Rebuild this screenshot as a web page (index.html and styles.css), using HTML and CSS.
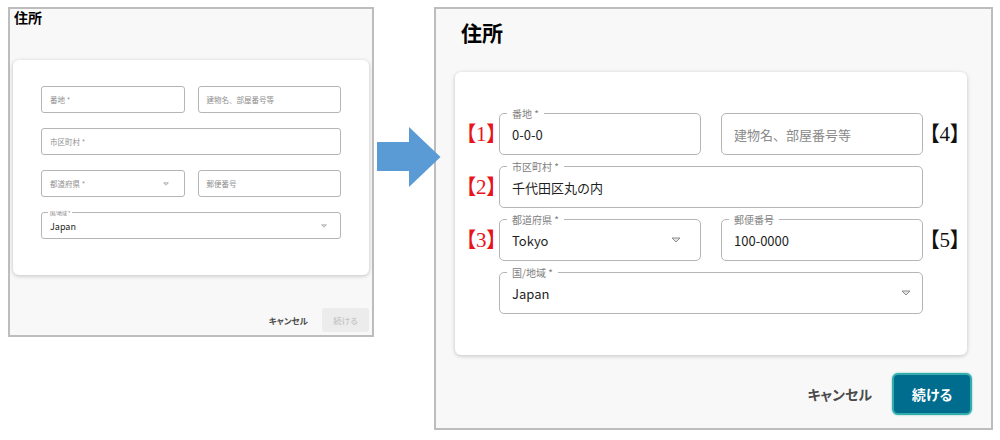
FILE: index.html
```html
<!DOCTYPE html>
<html lang="ja">
<head>
    <meta charset="UTF-8">
    <meta name="viewport" content="width=device-width, initial-scale=1.0">
    <title>住所</title>
    <link rel="stylesheet" href="styles.css">
</head>
<body>
    <div class="stage">
        <!-- before: empty form -->
        <section class="panel panel-before">
            <h2 class="title">住所</h2>
            <div class="card">
                <div class="grid">
                    <div class="field"><span class="placeholder">番地 *</span></div>
                    <div class="field"><span class="placeholder">建物名、部屋番号等</span></div>
                    <div class="field wide"><span class="placeholder">市区町村 *</span></div>
                    <div class="field select">
                        <span class="placeholder">都道府県 *</span>
                        <svg class="caret" viewBox="0 0 10 6"><path d="M1 1 H9 L5 5 Z"/></svg>
                    </div>
                    <div class="field"><span class="placeholder">郵便番号</span></div>
                    <div class="field wide select country">
                        <span class="label">国/地域 *</span>
                        <span class="value">Japan</span>
                        <svg class="caret" viewBox="0 0 10 6"><path d="M1 1 H9 L5 5 Z"/></svg>
                    </div>
                </div>
            </div>
            <div class="actions">
                <button class="btn-cancel">キャンセル</button>
                <button class="btn-next" disabled>続ける</button>
            </div>
        </section>

        <svg class="arrow" viewBox="0 0 64 60" width="64" height="60">
            <path d="M0 15 H32 V0 L63.5 30 L32 60 V44 H0 Z"/>
        </svg>

        <!-- after: filled form -->
        <section class="panel panel-after">
            <h2 class="title">住所</h2>
            <div class="card">
                <div class="grid">
                    <div class="field">
                        <span class="label">番地 *</span>
                        <span class="value">0-0-0</span>
                        <span class="mark mark-left red">【1】</span>
                    </div>
                    <div class="field">
                        <span class="placeholder">建物名、部屋番号等</span>
                        <span class="mark mark-right">【4】</span>
                    </div>
                    <div class="field wide">
                        <span class="label">市区町村 *</span>
                        <span class="value">千代田区丸の内</span>
                        <span class="mark mark-left red">【2】</span>
                    </div>
                    <div class="field select">
                        <span class="label">都道府県 *</span>
                        <span class="value">Tokyo</span>
                        <svg class="caret" viewBox="0 0 10 6"><path d="M1 1 H9 L5 5 Z"/></svg>
                        <span class="mark mark-left red">【3】</span>
                    </div>
                    <div class="field">
                        <span class="label">郵便番号</span>
                        <span class="value">100-0000</span>
                        <span class="mark mark-right">【5】</span>
                    </div>
                    <div class="field wide select country">
                        <span class="label">国/地域 *</span>
                        <span class="value">Japan</span>
                        <svg class="caret" viewBox="0 0 10 6"><path d="M1 1 H9 L5 5 Z"/></svg>
                    </div>
                </div>
            </div>
            <div class="actions">
                <button class="btn-cancel">キャンセル</button>
                <button class="btn-next">続ける</button>
            </div>
        </section>
    </div>
</body>
</html>
```

FILE: styles.css
```css
body {
    margin: 0;
    background: #fff;
    font-family: "Noto Sans CJK JP", "Noto Sans", sans-serif;
    color: #222;
}
.stage {
    display: flex;
    align-items: flex-start;
    padding: 7px 0 0 8px;
}
.panel {
    box-sizing: border-box;
    background: #f8f8f8;
    border: 2px solid #bdbdbd;
    display: flex;
    flex-direction: column;
}
.title {
    margin: 0;
    font-weight: bold;
    color: #000;
}
.card {
    background: #fff;
    border-radius: 6px;
    box-shadow: 0 1px 4px rgba(0, 0, 0, 0.22);
}
.grid {
    display: grid;
    grid-template-columns: 1fr 1fr;
}
.field {
    position: relative;
    display: flex;
    align-items: center;
    box-sizing: border-box;
    border: 1.5px solid #b5b5b5;
    border-radius: 5px;
    background: #fff;
}
.field.wide {
    grid-column: span 2;
}
.value {
    flex: 1;
    color: #1e1e1e;
}
.placeholder {
    flex: 1;
    color: #8a8a8a;
}
.label {
    position: absolute;
    top: 0;
    background: #fff;
    color: #808080;
    line-height: 1;
    transform: translateY(-55%);
}
.caret {
    fill: #e6e6e6;
    stroke: #8c8c8c;
    stroke-width: 1;
    stroke-linejoin: round;
}
.actions {
    display: flex;
    justify-content: flex-end;
    align-items: center;
}
.actions button {
    font-family: inherit;
    font-weight: bold;
    font-feature-settings: "palt";
    border: none;
    cursor: pointer;
    padding: 0;
}
.btn-cancel {
    background: none;
    color: #4a4a4a;
}

/* before panel (small) */
.panel-before {
    width: 366px;
    height: 330px;
    padding: 0 3px;
}
.panel-before .title {
    font-size: 14px;
    line-height: 14px;
    margin: 1px 0 36px 1px;
}
.panel-before .card {
    padding: 26px 28px 36px;
}
.panel-before .grid {
    column-gap: 13px;
    row-gap: 15px;
}
.panel-before .field {
    height: 27px;
    padding: 0 8px;
    border-width: 1px;
    border-radius: 3px;
}
.panel-before .placeholder {
    font-size: 7.5px;
    color: #8f8f8f;
}
.panel-before .value {
    font-size: 9px;
    padding-top: 1px;
}
.panel-before .label {
    font-size: 5px;
    left: 6px;
    padding: 0 2px;
}
.panel-before .caret {
    width: 6px;
    height: 4px;
    margin-right: 7px;
}
.panel-before .country .caret {
    margin-right: 5px;
}
.panel-before .actions {
    margin-top: 33px;
    gap: 14px;
}
.panel-before .btn-cancel {
    font-size: 8.5px;
}
.panel-before .btn-next {
    width: 47px;
    height: 24px;
    border-radius: 3px;
    background: #ececec;
    color: #bcbcbc;
    font-size: 8.5px;
    font-weight: normal;
}

/* arrow between panels */
.arrow {
    position: relative;
    z-index: 1;
    flex: none;
    margin: 120px -7px 0 3px;
    fill: #5b9bd5;
}

/* after panel (large) */
.panel-after {
    width: 559px;
    height: 423px;
    padding: 0 24px 0 19px;
}
.panel-after .title {
    font-size: 21px;
    line-height: 24px;
    margin: 11px 0 28px 6px;
}
.panel-after .card {
    padding: 41px 44px 41px;
}
.panel-after .grid {
    column-gap: 20px;
    row-gap: 11px;
}
.panel-after .field {
    height: 42px;
    padding: 0 12px;
}
.panel-after .value,
.panel-after .placeholder {
    font-size: 13px;
}
.panel-after .label {
    font-size: 10px;
    left: 7px;
    padding: 0 5px;
}
.panel-after .caret {
    width: 10px;
    height: 6px;
    margin-right: 7px;
}
.panel-after .country .caret {
    margin-right: -1px;
}
.mark {
    position: absolute;
    top: 50%;
    transform: translateY(-50%);
    font-family: "Liberation Serif", "Noto Sans CJK JP", serif;
    font-feature-settings: "palt";
    font-size: 21px;
    line-height: 1;
    color: #111;
    white-space: nowrap;
}
.mark.red {
    color: #e8141b;
}
.mark-left {
    right: 100%;
    margin-right: 3px;
}
.mark-right {
    left: 100%;
    margin-left: 7px;
}
.panel-after .actions {
    margin: 18px -5px 0 0;
    gap: 20px;
}
.panel-after .btn-cancel {
    font-size: 14px;
}
.panel-after .btn-next {
    box-sizing: border-box;
    width: 80px;
    height: 42px;
    border-radius: 6px;
    background: #006d8e;
    border: 2px solid #33acac;
    box-shadow: 0 0 2px rgba(40, 170, 170, 0.7);
    color: #fff;
    font-size: 14px;
}
```
